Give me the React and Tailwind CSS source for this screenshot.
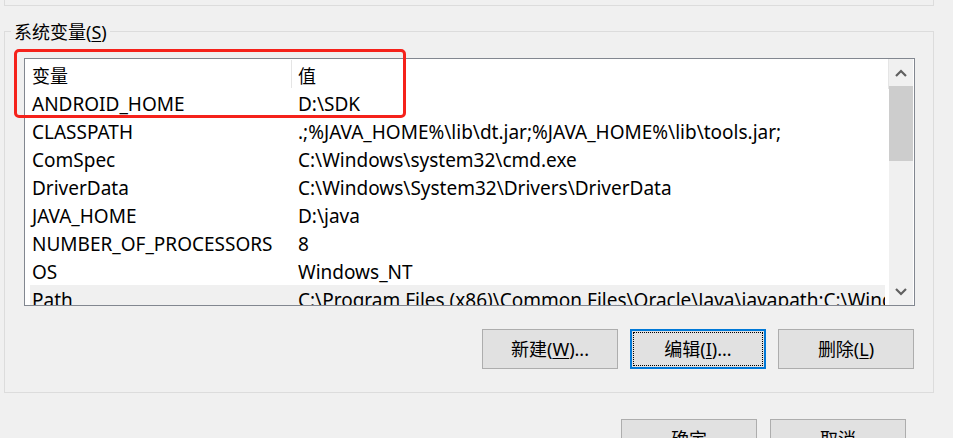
import React from 'react';

const rows = [
  ['ANDROID_HOME', 'D:\\SDK'],
  ['CLASSPATH', '.;%JAVA_HOME%\\lib\\dt.jar;%JAVA_HOME%\\lib\\tools.jar;'],
  ['ComSpec', 'C:\\Windows\\system32\\cmd.exe'],
  ['DriverData', 'C:\\Windows\\System32\\Drivers\\DriverData'],
  ['JAVA_HOME', 'D:\\java'],
  ['NUMBER_OF_PROCESSORS', '8'],
  ['OS', 'Windows_NT'],
  ['Path', 'C:\\Program Files (x86)\\Common Files\\Oracle\\Java\\javapath;C:\\Windows\\system32;C:\\Windows'],
];

const Chevron = ({ up }) => (
  <svg width="12" height="8" viewBox="0 0 12 8" className="text-[#606060]">
    <path
      d={up ? 'M1 7 L6 2 L11 7' : 'M1 1 L6 6 L11 1'}
      fill="none"
      stroke="currentColor"
      strokeWidth="2.2"
    />
  </svg>
);

const Button = ({ children, focused }) => (
  <div
    className={`w-[136px] h-[40px] shrink-0 flex items-center justify-center bg-[#e1e1e1] ${
      focused ? 'border-2 border-[#0078d7] p-[1px]' : 'border border-[#adadad]'
    }`}
  >
    {focused ? (
      <div className="w-full h-full flex items-center justify-center border border-dotted border-black">
        {children}
      </div>
    ) : (
      children
    )}
  </div>
);

export default function App() {
  return (
    <div
      className="relative w-[953px] h-[438px] overflow-hidden bg-[#f0f0f0] text-[18px] text-black leading-none"
      style={{ fontFamily: '"Noto Sans", "Noto Sans CJK SC", sans-serif' }}
    >
      {/* bottom edge of the previous group */}
      <div className="ml-[4px] w-[930px] h-[6px] border-b border-l border-r border-[#dcdcdc]" />

      {/* system variables group */}
      <div className="relative ml-[4px] mt-[25px] w-[930px] h-[362px] border border-[#dcdcdc]">
        <div className="absolute left-[6px] top-[-12px] px-[3px] bg-[#f0f0f0] h-[24px] flex items-center">
          系统变量(<span className="underline underline-offset-2">S</span>)
        </div>

        {/* list */}
        <div className="ml-[19px] mt-[26px] w-[891px] h-[248px] border border-[#828790] bg-white flex">
          <div className="flex-1 min-w-0 overflow-hidden flex flex-col">
            <div className="h-[30px] shrink-0 flex items-stretch">
              <div className="w-[266px] pl-[7px] pt-[3px] flex items-center">变量</div>
              <div className="w-px my-[1px] bg-[#e5e5e5]" />
              <div className="flex-1 pl-[6px] pt-[3px] flex items-center">值</div>
              <div className="w-px bg-[#e5e5e5]" />
            </div>
            {rows.map(([name, value], i) => {
              const last = i === rows.length - 1;
              return (
                <div
                  key={name}
                  className={`h-[28px] shrink-0 pt-[3px] flex items-center whitespace-nowrap overflow-hidden text-[19px] ${
                    last ? 'ml-[5px] mr-[4px] bg-[#f0f0f0]' : ''
                  }`}
                >
                  <div className={`${last ? 'w-[262px] pl-[2px]' : 'w-[267px] pl-[7px]'} shrink-0`}>{name}</div>
                  <div className="pl-[6px]">{value}</div>
                </div>
              );
            })}
          </div>

          {/* scrollbar */}
          <div className="w-[24px] shrink-0 mr-[1px] bg-[#f0f0f0] flex flex-col">
            <div className="h-[27px] flex items-center justify-center">
              <Chevron up />
            </div>
            <div className="h-[75px] bg-[#cdcdcd]" />
            <div className="flex-1" />
            <div className="h-[26px] flex items-center justify-center">
              <Chevron />
            </div>
          </div>
        </div>

        {/* buttons */}
        <div className="mt-[23px] mr-[19px] flex justify-end gap-[12px]">
          <Button>
            新建(<span className="underline underline-offset-2">W</span>)...
          </Button>
          <Button focused>
            编辑(<span className="underline underline-offset-2">I</span>)...
          </Button>
          <Button>
            删除(<span className="underline underline-offset-2">L</span>)
          </Button>
        </div>
      </div>

      {/* dialog buttons */}
      <div className="mt-[26px] mr-[47px] flex justify-end gap-[13px]">
        <Button>确定</Button>
        <Button>取消</Button>
      </div>

      {/* red highlight */}
      <div className="absolute left-[14px] top-[49px] w-[392px] h-[69px] border-[3px] border-[#f5221b] rounded-[5px]" />
    </div>
  );
}
